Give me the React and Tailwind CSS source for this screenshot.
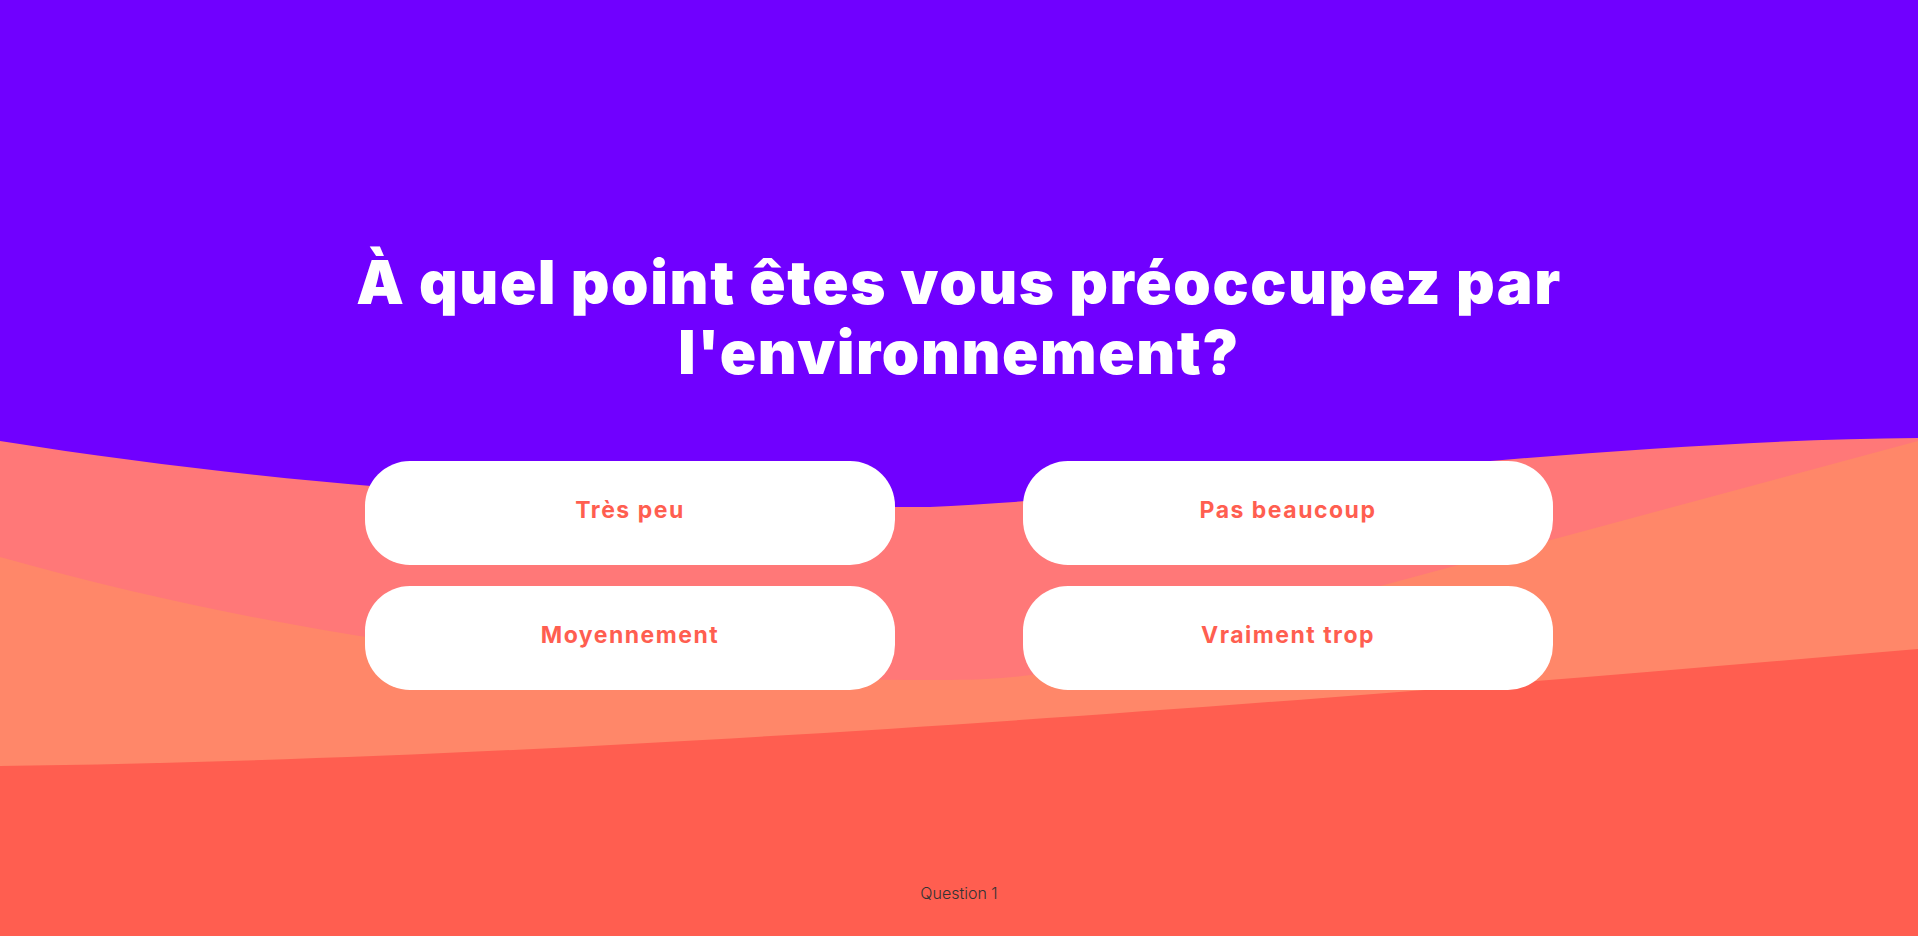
import React from "react";

const options = ["Très peu", "Pas beaucoup", "Moyennement", "Vraiment trop"];

function Waves() {
  return (
    <svg
      className="absolute inset-0 w-full h-full"
      viewBox="0 0 1918 936"
      preserveAspectRatio="none"
    >
      <path
        d="M0,441 C330,493 620,507 930,507 C1180,495 1600,440 1918,438 L1918,936 L0,936 Z"
        fill="#ff7878"
      />
      <path
        d="M0,557 C400,670 750,680 950,680 C1030,680 1080,668 1150,648 L1918,441 L1918,936 L0,936 Z"
        fill="#ff8769"
      />
      <path
        d="M0,766 C500,760 1100,720 1918,649 L1918,936 L0,936 Z"
        fill="#ff5e50"
      />
    </svg>
  );
}

export default function App() {
  return (
    <div
      className="relative h-[936px] w-full overflow-hidden bg-[#7000ff]"
      style={{ fontFamily: "Inter, 'Noto Sans', sans-serif" }}
    >
      <Waves />
      <div className="relative flex h-full flex-col items-center">
        <h1 className="pt-[247px] text-center text-[60px] font-black leading-[70px] tracking-[1.6px] text-white">
          À quel point êtes vous préoccupez par
          <br />
          l'environnement?
        </h1>

        <div className="mt-[74px] grid w-[1188px] grid-cols-2 gap-x-[128px] gap-y-[21px]">
          {options.map((o) => (
            <button
              key={o}
              className="flex h-[104px] items-center justify-center rounded-[45px] bg-white pb-[5px] text-[23px] font-bold tracking-[1.5px] text-[#ff5e50]"
            >
              {o}
            </button>
          ))}
        </div>

        <div className="mt-auto pb-[31px] text-[16px] font-light leading-6 text-[#333]">
          Question 1
        </div>
      </div>
    </div>
  );
}
